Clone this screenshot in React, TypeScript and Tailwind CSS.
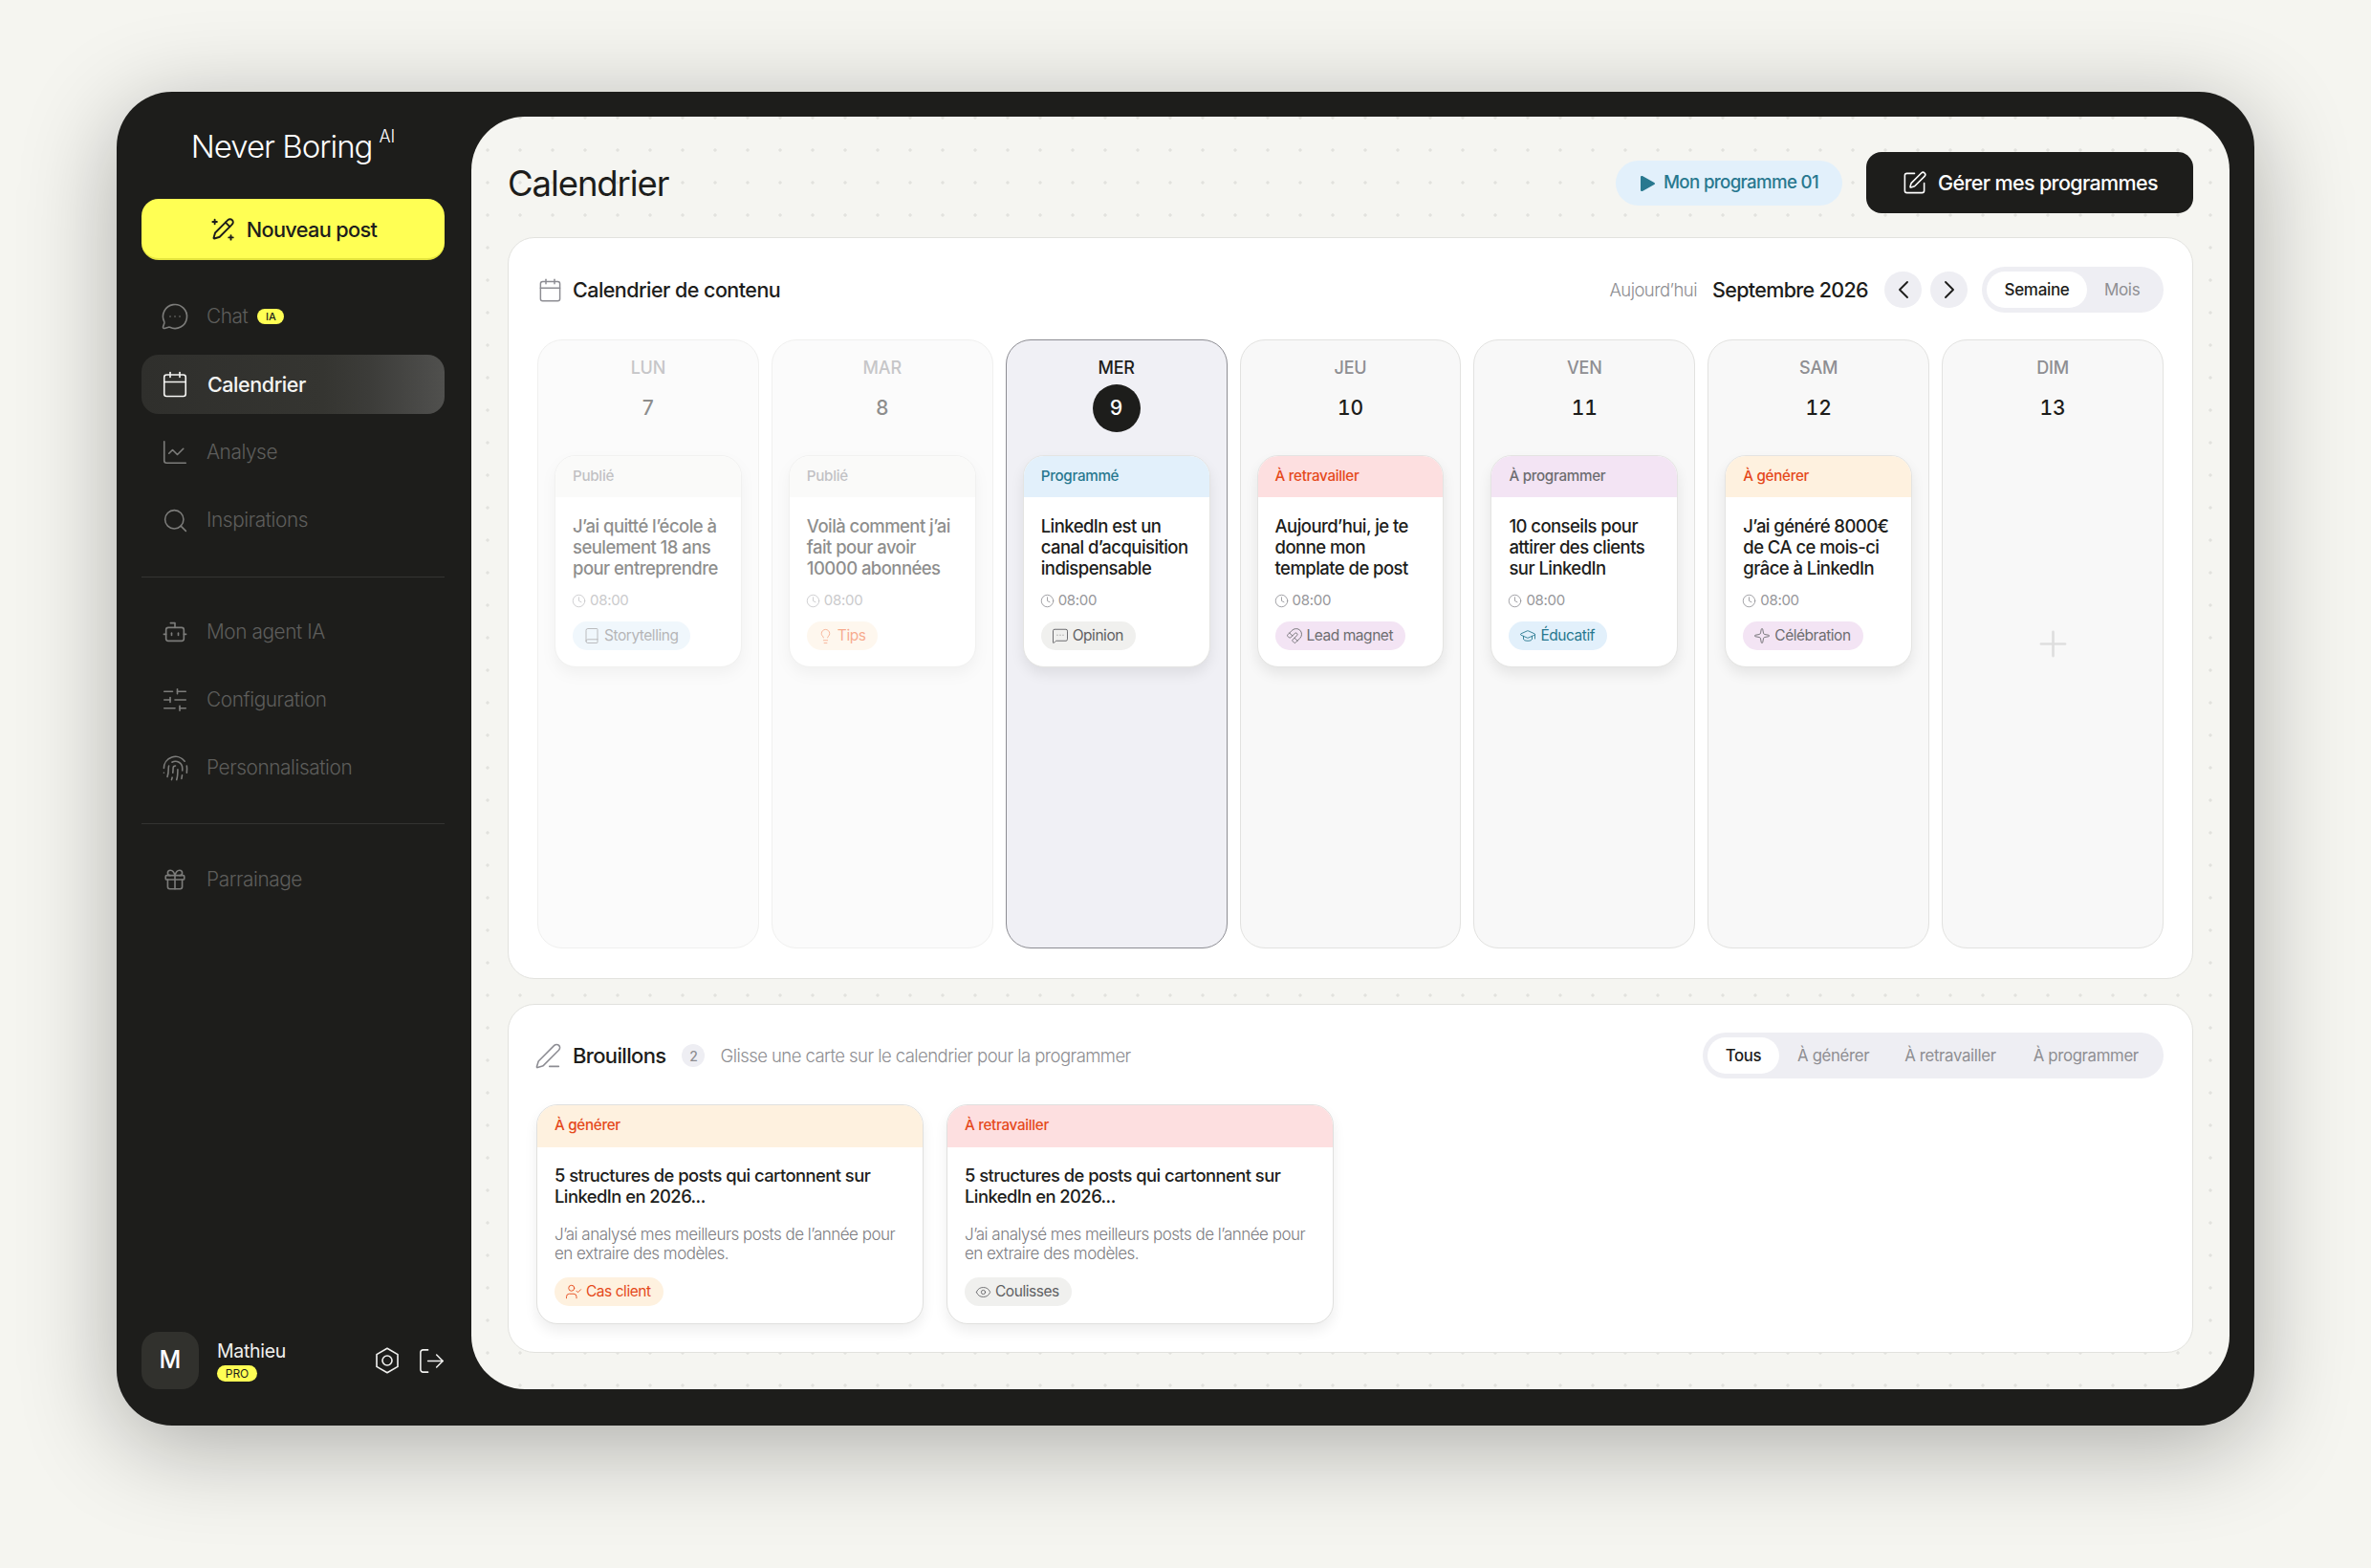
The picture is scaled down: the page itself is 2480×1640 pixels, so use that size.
import type { ReactNode } from "react"
import {
  Bot,
  Book,
  Calendar,
  ChartLine,
  ChevronLeft,
  ChevronRight,
  Clock,
  Eye,
  Fingerprint,
  Gift,
  GraduationCap,
  Lightbulb,
  LogOut,
  Magnet,
  MessageCircleMore,
  MessageSquareMore,
  PenLine,
  Plus,
  Search,
  Sparkle,
  SlidersHorizontal,
  SquarePen,
  UserCheck,
} from "lucide-react"

function PencilSparkles() {
  return (
    <svg width="27" height="27" viewBox="0 0 24 24" fill="none" stroke="currentColor" strokeWidth="1.7" strokeLinecap="round" strokeLinejoin="round">
      <path d="M21.2 6.8a2.8 2.8 0 0 0-4-4L5.8 14.2a2 2 0 0 0-.5.8l-1.3 4.4a.5.5 0 0 0 .6.6l4.4-1.3a2 2 0 0 0 .8-.5z" />
      <path d="m15 5 4 4" />
      <path d="M5 2.5v4M3 4.5h4" />
      <path d="M20 17v4M18 19h4" />
    </svg>
  )
}

function HexSettings() {
  return (
    <svg width="30" height="30" viewBox="0 0 24 24" fill="none" stroke="currentColor" strokeWidth="1.3" strokeLinejoin="round">
      <path d="M12 1.8 20.8 6.9v10.2L12 22.2 3.2 17.1V6.9z" />
      <circle cx="12" cy="12" r="4" />
    </svg>
  )
}

function NavItem({ icon, label, active, badge }: { icon: ReactNode; label: string; active?: boolean; badge?: string }) {
  return (
    <div
      className={
        active
          ? "flex h-[62px] items-center gap-[19px] rounded-[18px] bg-[linear-gradient(90deg,#2f2f2c_0%,#353531_60%,#3c3c39_75%,#50504e_100%)] pl-[20px] text-[#f4f4f2]"
          : "flex h-[62px] items-center gap-[18px] pl-[20px] text-[#7c7c7a]"
      }
    >
      <span className="flex w-[30px] justify-center">{icon}</span>
      <span className={active ? "text-[21.5px] font-medium tracking-[-0.02em]" : "text-[20.8px] font-light tracking-[-0.02em] text-[#5e5e5c]"}>
        {label}
      </span>
      {badge && (
        <span className="-ml-[8px] flex h-[16px] w-[28px] items-center justify-center rounded-full bg-[#ffff54] text-[11px] font-medium text-[#1d1d1b]">
          {badge}
        </span>
      )}
    </div>
  )
}

function Sidebar() {
  return (
    <aside className="flex h-full w-[371px] shrink-0 flex-col pl-[26px] pr-[28px] pt-[3px]">
      <div className="flex h-[56px] items-start justify-center pt-[8px] text-white">
        <span className="text-[33px] font-light leading-[40px] tracking-[-0.03em]">Never Boring</span>
        <span className="ml-[7px] mt-[-2px] text-[18px] font-light leading-[24px]">AI</span>
      </div>
      <button className="mt-[27px] flex h-[64px] items-center justify-center gap-[12px] rounded-[18px] border-b-2 border-[#e4e43e] bg-[#ffff54] pt-[2px] text-[21.7px] font-medium tracking-[-0.03em] text-[#1d1d1b]">
        <PencilSparkles />
        Nouveau post
      </button>
      <nav className="mt-[28px] flex flex-col gap-[9px]">
        <NavItem icon={<MessageCircleMore size={30} strokeWidth={1.3} />} label="Chat" badge="IA" />
        <NavItem icon={<Calendar size={30} strokeWidth={1.3} />} label="Calendrier" active />
        <NavItem icon={<ChartLine size={30} strokeWidth={1.3} />} label="Analyse" />
        <NavItem icon={<Search size={29} strokeWidth={1.3} />} label="Inspirations" />
      </nav>
      <div className="mb-[26px] mt-[28px] h-px bg-[#343432]" />
      <nav className="flex flex-col gap-[9px]">
        <NavItem icon={<Bot size={28} strokeWidth={1.4} />} label="Mon agent IA" />
        <NavItem icon={<SlidersHorizontal size={30} strokeWidth={1.3} />} label="Configuration" />
        <NavItem icon={<Fingerprint size={29} strokeWidth={1.3} />} label="Personnalisation" />
      </nav>
      <div className="my-[27px] h-px bg-[#343432]" />
      <NavItem icon={<Gift size={26} strokeWidth={1.5} />} label="Parrainage" />
      <div className="mt-auto flex items-center">
        <div className="flex h-[60px] w-[60px] items-center justify-center rounded-[18px] bg-[#31312d] text-[25px] font-medium text-white">M</div>
        <div className="ml-[19px]">
          <div className="text-[19.5px] font-normal leading-[24px] tracking-[-0.015em] text-[#f0f0ee]">Mathieu</div>
          <div className="mt-[3px] flex h-[17px] w-[42px] items-center justify-center rounded-full bg-[#ffff54] text-[12px] leading-none text-[#1d1d1b]">PRO</div>
        </div>
        <div className="-mr-[2px] ml-auto flex items-center gap-[16px] text-[#f0f0ee]">
          <HexSettings />
          <LogOut size={31} strokeWidth={1.2} />
        </div>
      </div>
    </aside>
  )
}

type Post = {
  status: string
  statusClass: string
  title: string[]
  tag: string
  tagIcon: ReactNode
  tagClass: string
}

const PEACH = "bg-[#fef1df] text-[#e5491b]"
const ROSE = "bg-[#fddfe0] text-[#e5491b]"
const LILAC = "bg-[#f3e4f4] text-[#6d6d70]"
const SKY = "bg-[#e2f0fb] text-[#28788f]"
const GREY = "bg-[#f7f7f5] text-[#85858a]"

const days: { label: string; num: number; past?: boolean; today?: boolean; post?: Post; plus?: boolean }[] = [
  {
    label: "LUN",
    num: 7,
    past: true,
    post: {
      status: "Publié",
      statusClass: GREY,
      title: ["J’ai quitté l’école à", "seulement 18 ans", "pour entreprendre"],
      tag: "Storytelling",
      tagIcon: <Book size={18} strokeWidth={1.2} />,
      tagClass: "bg-[#e2f0fb] text-[#6d6d70]",
    },
  },
  {
    label: "MAR",
    num: 8,
    past: true,
    post: {
      status: "Publié",
      statusClass: GREY,
      title: ["Voilà comment j’ai", "fait pour avoir", "10000 abonnées"],
      tag: "Tips",
      tagIcon: <Lightbulb size={17} strokeWidth={1.2} />,
      tagClass: "bg-[#fef1df] text-[#f0581c]",
    },
  },
  {
    label: "MER",
    num: 9,
    today: true,
    post: {
      status: "Programmé",
      statusClass: SKY,
      title: ["LinkedIn est un", "canal d’acquisition", "indispensable"],
      tag: "Opinion",
      tagIcon: <MessageSquareMore size={18} strokeWidth={1.2} />,
      tagClass: "bg-[#f0f0ee] text-[#5f5f62]",
    },
  },
  {
    label: "JEU",
    num: 10,
    post: {
      status: "À retravailler",
      statusClass: ROSE,
      title: ["Aujourd’hui, je te", "donne mon", "template de post"],
      tag: "Lead magnet",
      tagIcon: <Magnet size={18} strokeWidth={1.2} />,
      tagClass: "bg-[#f3e4f4] text-[#6d6d70]",
    },
  },
  {
    label: "VEN",
    num: 11,
    post: {
      status: "À programmer",
      statusClass: LILAC,
      title: ["10 conseils pour", "attirer des clients", "sur LinkedIn"],
      tag: "Éducatif",
      tagIcon: <GraduationCap size={18} strokeWidth={1.2} />,
      tagClass: "bg-[#e2f0fb] text-[#28788f]",
    },
  },
  {
    label: "SAM",
    num: 12,
    post: {
      status: "À générer",
      statusClass: PEACH,
      title: ["J’ai généré 8000€", "de CA ce mois-ci", "grâce à LinkedIn"],
      tag: "Célébration",
      tagIcon: <Sparkle size={18} strokeWidth={1.2} />,
      tagClass: "bg-[#f3e4f4] text-[#6d6d70]",
    },
  },
  { label: "DIM", num: 13, plus: true },
]

function Tag({ icon, label, className }: { icon: ReactNode; label: string; className: string }) {
  return (
    <span className={"inline-flex h-[30px] items-center gap-[4px] rounded-full pl-[11px] pr-[13px] text-[15.5px] leading-none tracking-[-0.03em] " + className}>
      {icon}
      {label}
    </span>
  )
}

function PostCard({ post }: { post: Post }) {
  return (
    <div className="overflow-hidden rounded-[22px] border border-[#e4e4e2] bg-white shadow-[0_7px_14px_rgba(0,0,0,0.08)]">
      <div className={"flex h-[43px] items-center px-[18px] pb-[1px] text-[15.2px] font-medium tracking-[-0.02em] " + post.statusClass}>{post.status}</div>
      <div className="px-[18px] pb-[17px] pt-[19px]">
        <p className="text-[18.5px] font-medium leading-[22px] tracking-[-0.03em] text-[#1d1d1b]">
          {post.title.map((line) => (
            <span key={line} className="block whitespace-nowrap">
              {line}
            </span>
          ))}
        </p>
        <div className="mt-[13px] flex h-[20px] items-center gap-[4px] text-[15px] tracking-[-0.02em] text-[#96969a]">
          <Clock size={15} strokeWidth={1.4} className="-ml-[1px]" />
          08:00
        </div>
        <div className="mt-[12px] flex">
          <Tag icon={post.tagIcon} label={post.tag} className={post.tagClass} />
        </div>
      </div>
    </div>
  )
}

function DayColumn({ day }: { day: (typeof days)[number] }) {
  let cls = "relative flex flex-col rounded-[26px] border px-[17px] pt-[17px] "
  if (day.today) cls += "border-[#8d8d93] bg-[#f0f0f5]"
  else if (day.past) cls += "border-[#e2e2e0] bg-[#f8f8f8] opacity-50"
  else cls += "border-[#e2e2e0] bg-[#f8f8f8]"
  return (
    <div className={cls}>
      <div className={day.today ? "h-[24px] text-center text-[18px] font-medium leading-[24px] tracking-[-0.01em] text-[#1d1d1b]" : "h-[24px] text-center text-[18px] font-medium leading-[24px] tracking-[-0.01em] text-[#8e8e92]"}>
        {day.label}
      </div>
      <div className="mt-[5px] flex h-[50px] items-center justify-center tabular-nums">
        {day.today ? (
          <span className="flex h-[50px] w-[50px] items-center justify-center rounded-full bg-[#1d1d1b] text-[21px] font-medium text-white">{day.num}</span>
        ) : (
          <span className="text-[21px] font-medium text-[#1d1d1b]">{day.num}</span>
        )}
      </div>
      {day.post && (
        <div className="mt-[24px]">
          <PostCard post={day.post} />
        </div>
      )}
      {day.plus && (
        <div className="absolute inset-0 flex items-center justify-center text-[#dedede]">
          <Plus size={43} strokeWidth={1.5} />
        </div>
      )}
    </div>
  )
}

function CalendarCard() {
  return (
    <section className="flex h-[776px] flex-col rounded-[28px] border border-[#e2e2de] bg-white px-[30px] pb-[31px] pt-[30px]">
      <header className="flex h-[48px] items-center">
        <Calendar size={27} strokeWidth={1.3} className="text-[#8d8d93]" />
        <h2 className="ml-[10px] text-[21.5px] font-medium tracking-[-0.025em] text-[#1d1d1b]">Calendrier de contenu</h2>
        <div className="ml-auto flex items-center">
          <span className="mt-[1px] text-[18.5px] font-light tracking-[-0.03em] text-[#8e8e92]">Aujourd’hui</span>
          <span className="ml-[16px] text-[21.5px] font-medium tracking-[-0.03em] text-[#1d1d1b]">Septembre 2026</span>
          <button className="ml-[17px] flex h-[38px] w-[39px] items-center justify-center rounded-full bg-[#eeeef3] text-[#1d1d1b]">
            <ChevronLeft size={32} strokeWidth={1.4} />
          </button>
          <button className="ml-[9px] flex h-[38px] w-[39px] items-center justify-center rounded-full bg-[#eeeef3] text-[#1d1d1b]">
            <ChevronRight size={32} strokeWidth={1.4} />
          </button>
          <div className="ml-[15px] flex h-[48px] w-[190px] items-center rounded-full bg-[#eeeef3] px-[5px]">
            <span className="flex h-[38px] w-[105px] items-center justify-center rounded-full bg-white pt-[1px] text-[17px] font-medium tracking-[-0.02em] text-[#1d1d1b]">Semaine</span>
            <span className="ml-[18px] mt-[1px] text-[17px] tracking-[-0.02em] text-[#8e8e92]">Mois</span>
          </div>
        </div>
      </header>
      <div className="mt-[28px] grid min-h-0 flex-1 grid-cols-7 gap-[13px]">
        {days.map((day) => (
          <DayColumn key={day.label} day={day} />
        ))}
      </div>
    </section>
  )
}

const drafts = [
  {
    status: "À générer",
    statusClass: PEACH,
    tag: "Cas client",
    tagIcon: <UserCheck size={18} strokeWidth={1.2} />,
    tagClass: "bg-[#fef1df] text-[#e5491b]",
  },
  {
    status: "À retravailler",
    statusClass: ROSE,
    tag: "Coulisses",
    tagIcon: <Eye size={17} strokeWidth={1.2} />,
    tagClass: "bg-[#f0f0ee] text-[#5f5f62]",
  },
]

function DraftsCard() {
  return (
    <section className="h-[365px] rounded-[28px] border border-[#e2e2de] bg-white pl-[29px] pr-[30px] pt-[29px]">
      <header className="flex h-[48px] items-center">
        <PenLine size={29} strokeWidth={1.3} className="-ml-[2px] text-[#8d8d93]" />
        <h2 className="ml-[11px] text-[22px] font-medium tracking-[-0.03em] text-[#1d1d1b]">Brouillons</h2>
        <span className="ml-[17px] flex h-[24px] w-[24px] items-center justify-center rounded-full bg-[#eeeef3] text-[14px] font-medium text-[#8e8e92]">2</span>
        <span className="ml-[16px] mt-[1px] text-[18.5px] font-light tracking-[-0.03em] text-[#8e8e92]">Glisse une carte sur le calendrier pour la programmer</span>
        <div className="ml-auto flex h-[48px] w-[482px] items-center whitespace-nowrap rounded-full bg-[#eeeef3] px-[5px] text-[16.8px] tracking-[-0.02em] text-[#8e8e92]">
          <span className="flex h-[38px] w-[75px] items-center justify-center rounded-full bg-white pt-[1px] font-medium text-[#1d1d1b]">Tous</span>
          <span className="ml-[19px] mt-[1px]">À générer</span>
          <span className="ml-[37px] mt-[1px]">À retravailler</span>
          <span className="ml-[39px] mt-[1px]">À programmer</span>
        </div>
      </header>
      <div className="mt-[27px] flex gap-[24px]">
        {drafts.map((d) => (
          <article key={d.status} className="w-[405px] overflow-hidden rounded-[22px] border border-[#e0e0de] bg-white shadow-[0_7px_14px_rgba(0,0,0,0.07)]">
            <div className={"flex h-[44px] items-center px-[18px] pb-[1px] text-[15.2px] font-medium tracking-[-0.02em] " + d.statusClass}>{d.status}</div>
            <div className="px-[18px] pb-[18px] pt-[18px]">
              <p className="whitespace-nowrap text-[18.4px] font-medium leading-[22px] tracking-[-0.03em] text-[#1d1d1b]">
                5 structures de posts qui cartonnent sur
                <br />
                LinkedIn en 2026...
              </p>
              <p className="mt-[19px] whitespace-nowrap text-[17px] font-light leading-[20px] tracking-[-0.03em] text-[#7d7d82]">
                J’ai analysé mes meilleurs posts de l’année pour
                <br />
                en extraire des modèles.
              </p>
              <div className="mt-[15px] flex">
                <Tag icon={d.tagIcon} label={d.tag} className={d.tagClass} />
              </div>
            </div>
          </article>
        ))}
      </div>
    </section>
  )
}

export default function App() {
  return (
    <div className="h-[1640px] w-[2480px] overflow-hidden bg-[#f5f5f0] pl-[122px] pt-[96px] font-['Inter',sans-serif]">
      <div className="flex h-[1395px] w-[2236px] rounded-[58px] bg-[#1d1d1b] pb-[38px] pr-[26px] pt-[26px] shadow-[0_20px_100px_rgba(0,0,0,0.3)]">
        <Sidebar />
        <main className="flex h-full w-[1839px] flex-col gap-[26px] rounded-[56px] bg-[#f5f5f1] bg-[radial-gradient(#e2e2de_1.5px,transparent_1.7px)] bg-[position:0_-16px] bg-[size:34px_34px] px-[38px] pb-[38px] pt-[37px]">
          <div className="mb-[-1px] flex h-[64px] items-center">
            <h1 className="mt-[2px] text-[36.5px] font-normal tracking-[-0.03em] text-[#1d1d1b]">Calendrier</h1>
            <div className="ml-auto flex h-[47px] w-[237px] items-center justify-center gap-[8px] rounded-full bg-[#e2f0fb] pt-[1px] text-[18.7px] font-medium tracking-[-0.035em] text-[#28788f]">
              <svg width="17" height="18" viewBox="0 0 17 18" fill="currentColor">
                <path d="M1 2.2C1 1.2 2 .6 2.9 1.1l12.4 6.8c.9.5.9 1.7 0 2.2L2.9 16.9C2 17.4 1 16.8 1 15.8z" />
              </svg>
              Mon programme 01
            </div>
            <button className="ml-[25px] flex h-[64px] w-[342px] items-center justify-center gap-[11px] rounded-[16px] bg-[#1d1d1b] text-[21.5px] font-medium tracking-[-0.03em] text-white">
              <SquarePen size={27} strokeWidth={1.4} />
              Gérer mes programmes
            </button>
          </div>
          <CalendarCard />
          <DraftsCard />
        </main>
      </div>
    </div>
  )
}
